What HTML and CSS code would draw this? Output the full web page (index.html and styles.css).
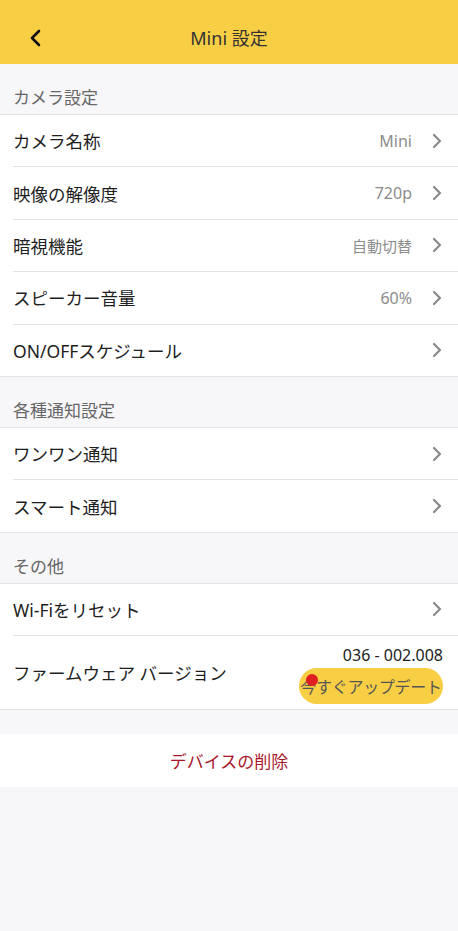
FILE: index.html
```html
<!DOCTYPE html>
<html lang="ja">
<head>
    <meta charset="UTF-8">
    <meta name="viewport" content="width=device-width, initial-scale=1.0">
    <title>Mini 設定</title>
    <link rel="stylesheet" href="styles.css">
</head>
<body>
    <div class="header">
        <span class="back">
            <svg width="14" height="18" viewBox="0 0 14 18"><path d="M11 2 L4 9 L11 16" fill="none" stroke="#111" stroke-width="2.6" stroke-linecap="round" stroke-linejoin="round"/></svg>
        </span>
        <h1>Mini 設定</h1>
    </div>

    <!-- カメラ設定 -->
    <div class="section-title">カメラ設定</div>
    <div class="list">
        <div class="row">
            <div class="row-body">
                <span class="label">カメラ名称</span>
                <span class="value">Mini</span>
                <svg class="arrow" viewBox="0 0 10 16"><path d="M2 2 L8 8 L2 14" fill="none" stroke="#8a8a8a" stroke-width="2.2" stroke-linecap="round" stroke-linejoin="round"/></svg>
            </div>
        </div>
        <div class="row">
            <div class="row-body">
                <span class="label">映像の解像度</span>
                <span class="value">720p</span>
                <svg class="arrow" viewBox="0 0 10 16"><path d="M2 2 L8 8 L2 14" fill="none" stroke="#8a8a8a" stroke-width="2.2" stroke-linecap="round" stroke-linejoin="round"/></svg>
            </div>
        </div>
        <div class="row">
            <div class="row-body">
                <span class="label">暗視機能</span>
                <span class="value small">自動切替</span>
                <svg class="arrow" viewBox="0 0 10 16"><path d="M2 2 L8 8 L2 14" fill="none" stroke="#8a8a8a" stroke-width="2.2" stroke-linecap="round" stroke-linejoin="round"/></svg>
            </div>
        </div>
        <div class="row">
            <div class="row-body">
                <span class="label">スピーカー音量</span>
                <span class="value">60%</span>
                <svg class="arrow" viewBox="0 0 10 16"><path d="M2 2 L8 8 L2 14" fill="none" stroke="#8a8a8a" stroke-width="2.2" stroke-linecap="round" stroke-linejoin="round"/></svg>
            </div>
        </div>
        <div class="row">
            <div class="row-body">
                <span class="label">ON/OFFスケジュール</span>
                <svg class="arrow" viewBox="0 0 10 16"><path d="M2 2 L8 8 L2 14" fill="none" stroke="#8a8a8a" stroke-width="2.2" stroke-linecap="round" stroke-linejoin="round"/></svg>
            </div>
        </div>
    </div>

    <!-- 各種通知設定 -->
    <div class="section-title">各種通知設定</div>
    <div class="list">
        <div class="row">
            <div class="row-body">
                <span class="label">ワンワン通知</span>
                <svg class="arrow" viewBox="0 0 10 16"><path d="M2 2 L8 8 L2 14" fill="none" stroke="#8a8a8a" stroke-width="2.2" stroke-linecap="round" stroke-linejoin="round"/></svg>
            </div>
        </div>
        <div class="row">
            <div class="row-body">
                <span class="label">スマート通知</span>
                <svg class="arrow" viewBox="0 0 10 16"><path d="M2 2 L8 8 L2 14" fill="none" stroke="#8a8a8a" stroke-width="2.2" stroke-linecap="round" stroke-linejoin="round"/></svg>
            </div>
        </div>
    </div>

    <!-- その他 -->
    <div class="section-title">その他</div>
    <div class="list">
        <div class="row">
            <div class="row-body">
                <span class="label">Wi-Fiをリセット</span>
                <svg class="arrow" viewBox="0 0 10 16"><path d="M2 2 L8 8 L2 14" fill="none" stroke="#8a8a8a" stroke-width="2.2" stroke-linecap="round" stroke-linejoin="round"/></svg>
            </div>
        </div>
        <div class="row">
            <div class="row-body firmware">
                <span class="label">ファームウェア バージョン</span>
                <div class="fw-right">
                    <span class="fw-version">036 - 002.008</span>
                    <button class="update-btn">今すぐアップデート<span class="dot"></span></button>
                </div>
            </div>
        </div>
    </div>

    <div class="delete">デバイスの削除</div>
</body>
</html>
```

FILE: styles.css
```css
body {
    margin: 0;
    background: #f7f6f9;
    font-family: "Noto Sans", "Noto Sans CJK JP", sans-serif;
    color: #222;
}
.header {
    position: relative;
    height: 64px;
    background: #f8ce44;
    display: flex;
    align-items: center;
    justify-content: center;
}
.header h1 {
    margin: 0;
    font-size: 18px;
    font-weight: 400;
    color: #333;
    padding-top: 10px;
}
.back {
    position: absolute;
    left: 28px;
    top: 29px;
    display: flex;
}
.section-title {
    height: 51px;
    box-sizing: border-box;
    padding: 22px 13px 0;
    line-height: 24px;
    font-size: 17px;
    font-weight: 400;
    color: #666;
    border-bottom: 1px solid #e2e2e6;
}
.list {
    background: #fff;
    border-bottom: 1px solid #e2e2e6;
}
.row {
    padding-left: 13px;
}
.row-body {
    height: 52.4px;
    box-sizing: border-box;
    display: flex;
    align-items: center;
    padding-right: 16px;
    border-bottom: 1px solid #e2e2e6;
}
.row:last-child .row-body {
    border-bottom: none;
    height: 51.4px;
}
.label {
    flex: 1;
    font-size: 17.5px;
    color: #1e1e1e;
}
.value {
    font-size: 16px;
    color: #8c8c8c;
    margin-right: 20px;
}
.value.small {
    font-size: 15px;
}
.arrow {
    width: 10px;
    height: 16px;
}
.row:last-child .row-body.firmware {
    height: 73px;
}
.fw-right {
    display: flex;
    flex-direction: column;
    align-items: flex-end;
    margin-right: -1px;
}
.fw-version {
    font-size: 16px;
    color: #222;
    line-height: 20px;
    margin-top: 4px;
}
.update-btn {
    position: relative;
    margin-top: 3px;
    height: 36px;
    width: 144px;
    border: none;
    border-radius: 18px;
    background: #f8ce44;
    font-family: inherit;
    font-size: 16px;
    color: #555;
    padding: 0;
    letter-spacing: -0.3px;
}
.dot {
    position: absolute;
    left: 7px;
    top: 6px;
    width: 12px;
    height: 12px;
    border-radius: 50%;
    background: #e02020;
}
.delete {
    margin-top: 24px;
    height: 53px;
    background: #fff;
    display: flex;
    align-items: center;
    justify-content: center;
    font-size: 17px;
    color: #a8182c;
}
```
